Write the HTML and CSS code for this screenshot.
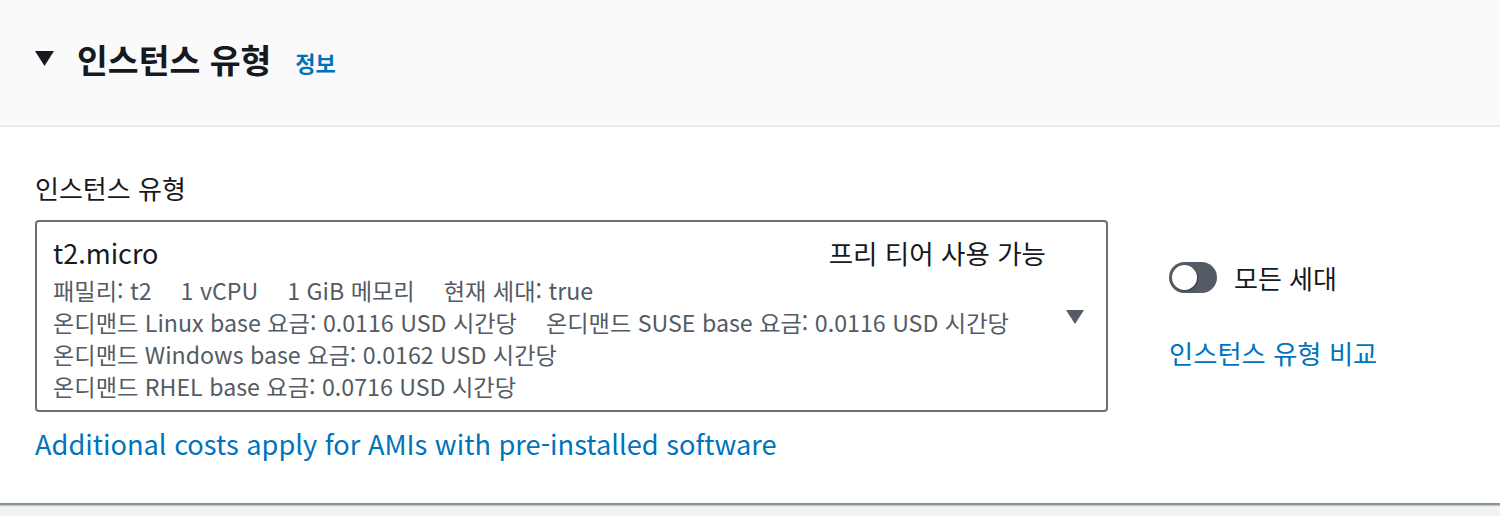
FILE: index.html
```html
<!DOCTYPE html>
<html lang="ko">
<head>
<meta charset="utf-8">
<link rel="stylesheet" href="styles.css">
</head>
<body>
<div class="panel">
  <div class="header">
    <svg class="caret" width="19" height="15" viewBox="0 0 19 15"><polygon points="0,0 19,0 9.5,15" fill="#16191f"/></svg>
    <h2 class="title">인스턴스 유형</h2>
    <a class="info">정보</a>
  </div>
  <div class="body">
    <div class="left">
      <div class="label">인스턴스 유형</div>
      <div class="select">
        <div class="select-main">
          <div class="row-top">
            <span class="name">t2.micro</span>
            <span class="tag">프리 티어 사용 가능</span>
          </div>
          <div class="detail"><span class="gap">패밀리: t2</span><span class="gap">1 vCPU</span><span class="gap">1 GiB 메모리</span><span>현재 세대: true</span></div>
          <div class="detail"><span class="gap">온디맨드 Linux base 요금: 0.0116 USD 시간당</span><span>온디맨드 SUSE base 요금: 0.0116 USD 시간당</span></div>
          <div class="detail">온디맨드 Windows base 요금: 0.0162 USD 시간당</div>
          <div class="detail">온디맨드 RHEL base 요금: 0.0716 USD 시간당</div>
        </div>
        <svg class="arrow" width="18" height="14" viewBox="0 0 18 14"><polygon points="0,0 18,0 9,14" fill="#545b64"/></svg>
      </div>
      <a class="link cost">Additional costs apply for AMIs with pre-installed software</a>
    </div>
    <div class="right">
      <div class="toggle-row">
        <span class="toggle"><span class="knob"></span></span>
        <span class="toggle-label">모든 세대</span>
      </div>
      <a class="link compare">인스턴스 유형 비교</a>
    </div>
  </div>
</div>
<div class="footer"></div>
</body>
</html>
```
FILE: styles.css
```css
html, body {
  margin: 0;
  padding: 0;
  background: #f2f3f3;
  font-family: "Noto Sans CJK KR", "Noto Sans", sans-serif;
  color: #16191f;
}
.panel {
  background: #ffffff;
  border-bottom: 2px solid #879596;
  box-shadow: 0 1px 1px rgba(0,28,36,0.2);
}
.header {
  height: 127px;
  box-sizing: border-box;
  background: #fafafa;
  border-bottom: 2px solid #eaeded;
  display: flex;
  align-items: center;
  padding: 0 0 8px 35px;
}
.caret {
  margin-right: 23px;
}
.title {
  margin: 0;
  font-size: 33.5px;
  font-weight: 700;
}
.info {
  margin-left: 24px;
  font-size: 22px;
  font-weight: 700;
  color: #0073bb;
  margin-top: 6px;
}
.body {
  display: flex;
  padding: 44px 0 42px 35px;
}
.left {
  width: 1073px;
}
.label {
  font-size: 26px;
  line-height: 34px;
  margin-bottom: 15px;
}
.select {
  border: 2px solid #687078;
  border-radius: 4px;
  display: flex;
  align-items: center;
  padding: 10px 22px 8px 16px;
}
.select-main {
  flex: 1;
}
.row-top {
  display: flex;
  justify-content: space-between;
  align-items: baseline;
  padding-right: 20px;
}
.name {
  font-size: 27px;
  line-height: 42px;
}
.tag {
  font-size: 26.5px;
  line-height: 42px;
}
.detail {
  font-size: 23.2px;
  line-height: 32px;
  color: #545b64;
}
.gap {
  margin-right: 29px;
}
.link {
  color: #0073bb;
}
.cost {
  display: block;
  font-size: 27.2px;
  line-height: 36px;
  margin-top: 13px;
}
.right {
  margin-left: 61px;
  padding-top: 88px;
}
.toggle-row {
  display: flex;
  align-items: center;
}
.toggle {
  width: 48px;
  height: 31px;
  border-radius: 16px;
  background: #545b64;
  display: flex;
  align-items: center;
  padding-left: 3px;
  box-sizing: border-box;
}
.knob {
  width: 25px;
  height: 25px;
  border-radius: 50%;
  background: #ffffff;
  box-shadow: 1px 1px 2px rgba(0,0,0,0.3);
}
.toggle-label {
  font-size: 26px;
  margin-left: 17px;
}
.compare {
  display: block;
  font-size: 26.3px;
  margin-top: 37px;
}
.footer {
  height: 20px;
}
```
